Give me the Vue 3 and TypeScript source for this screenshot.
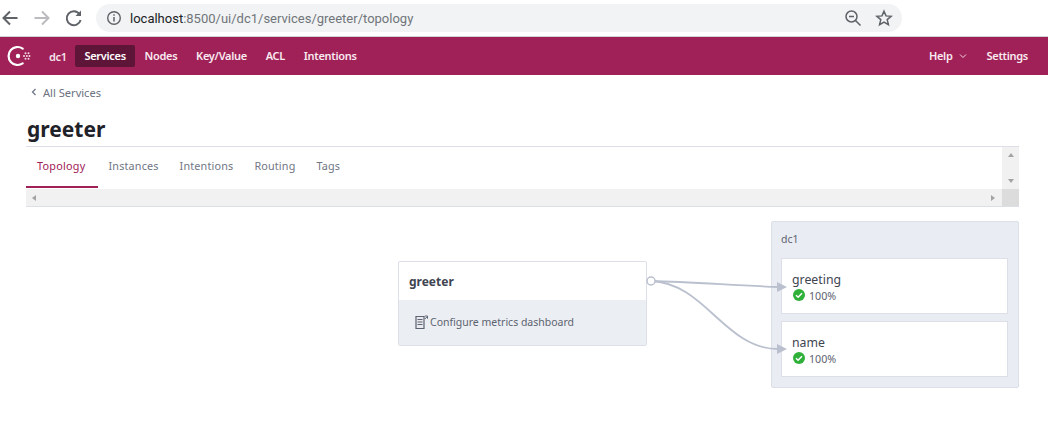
<script setup lang="ts">
const navItems = [
  { label: 'Services', active: true },
  { label: 'Nodes', active: false },
  { label: 'Key/Value', active: false },
  { label: 'ACL', active: false },
  { label: 'Intentions', active: false },
]
const tabs = ['Topology', 'Instances', 'Intentions', 'Routing', 'Tags']
const upstreams = ['greeting', 'name']
</script>

<template>
  <div class="page">
    <header class="browser">
      <svg class="cicon back" width="20" height="20" viewBox="0 0 20 20"><path d="M17.500 10H4M10 3.500 3.500 10l6.500 6.500" fill="none" stroke="#5f6368" stroke-width="2"/></svg>
      <svg class="cicon fwd" width="20" height="20" viewBox="0 0 20 20"><path d="M2.500 10H16M10 3.500l6.500 6.500-6.500 6.500" fill="none" stroke="#b9bbbe" stroke-width="2"/></svg>
      <svg class="cicon reload" width="20" height="20" viewBox="0 0 20 20"><path d="M15.500 6.200A7 7 0 1 0 16.600 12" fill="none" stroke="#5f6368" stroke-width="2"/><path d="M17 2.500V8h-5.500z" fill="#5f6368"/></svg>
      <div class="omnibox">
        <svg width="16" height="16" viewBox="0 0 16 16"><circle cx="8" cy="8" r="6.300" fill="none" stroke="#5f6368" stroke-width="1.400"/><path d="M8 7v4.500M8 4.300v1.500" stroke="#5f6368" stroke-width="1.500"/></svg>
        <span class="url"><span class="host">localhost</span>:8500/ui/dc1/services/greeter/topology</span>
        <svg class="zoomout" width="18" height="18" viewBox="0 0 18 18"><circle cx="7.500" cy="7.500" r="5.500" fill="none" stroke="#5f6368" stroke-width="1.500"/><path d="M5 7.500h5M11.500 11.500l5 5" stroke="#5f6368" stroke-width="1.500"/></svg>
        <svg class="star" width="18" height="18" viewBox="0 0 18 18"><path d="M9 2.200l2 4.700 5.100.4-3.900 3.300 1.200 5L9 13l-4.400 2.600 1.200-5-3.900-3.300 5.100-.4z" fill="none" stroke="#5f6368" stroke-width="1.500"/></svg>
      </div>
    </header>

    <nav class="topnav">
      <svg class="logo" width="25" height="24" viewBox="0 0 25 24">
        <path d="M16.700 4.600a9 9 0 1 0 0 14.800" fill="none" stroke="#fff" stroke-width="2.200" stroke-linecap="round"/>
        <circle cx="12" cy="12" r="2.200" fill="#fff"/>
        <circle cx="18" cy="12" r="1" fill="#f3d8e3"/><circle cx="20.800" cy="12" r="1" fill="#f3d8e3"/><circle cx="23.500" cy="12" r="1" fill="#f3d8e3"/>
        <circle cx="19.500" cy="9.300" r="1" fill="#f3d8e3"/><circle cx="22.500" cy="9.300" r="1" fill="#f3d8e3"/><circle cx="19.500" cy="14.700" r="1" fill="#f3d8e3"/><circle cx="22.500" cy="14.700" r="1" fill="#f3d8e3"/>
      </svg>
      <span class="dc">dc1</span>
      <a v-for="item in navItems" :key="item.label" class="navlink" :class="{ active: item.active }">{{ item.label }}</a>
      <span class="spacer"></span>
      <a class="navlink help">Help
        <svg width="8" height="6" viewBox="0 0 8 6"><path d="M1 1.500 4 4.500l3-3" fill="none" stroke="#f0d5e0" stroke-width="1"/></svg>
      </a>
      <a class="navlink settings">Settings</a>
    </nav>

    <main class="content">
      <div class="crumb">
        <svg width="6" height="8" viewBox="0 0 6 8"><path d="M4.500 1 1.500 4l3 3" fill="none" stroke="#6b7280" stroke-width="1.200"/></svg>
        <span>All Services</span>
      </div>
      <h1>greeter</h1>

      <div class="tabframe">
        <div class="tabarea">
          <div class="tabs">
            <a v-for="(t, i) in tabs" :key="t" class="tab" :class="{ current: i === 0 }">{{ t }}</a>
          </div>
          <div class="vbar">
            <i class="tri up"></i>
            <i class="tri down"></i>
          </div>
        </div>
        <div class="hbar">
          <i class="tri left"></i>
          <i class="tri right"></i>
          <i class="corner"></i>
        </div>
      </div>

      <section class="topology">
        <svg class="wires" width="145" height="100" viewBox="0 0 145 100">
          <path d="M5 21C44 22 84 25 132 27" fill="none" stroke="#bac0ce" stroke-width="1.800"/>
          <path d="M5 21C59 23 79 89 132 89" fill="none" stroke="#bac0ce" stroke-width="1.800"/>
          <path d="M131 22l10 5-10 5zM131 84l10 5-10 5z" fill="#bac0ce"/>
          <circle cx="5" cy="21" r="4" fill="#fff" stroke="#bac0ce" stroke-width="1.500"/>
        </svg>

        <div class="card">
          <div class="card-head">greeter</div>
          <div class="card-foot">
            <svg width="13" height="14" viewBox="0 0 13 14">
              <path d="M1 1.500h8v12H1z" fill="#e8eaef" stroke="#5d6370" stroke-width="1.200"/>
              <path d="M2.500 4.500h5M2.500 7h5M2.500 9.500h5" stroke="#5d6370" stroke-width="1.200"/>
              <path d="M9.800 4 12 1.800M9.800 1h2.700v2.700" fill="none" stroke="#5d6370" stroke-width="1"/>
            </svg>
            <span>Configure metrics dashboard</span>
          </div>
        </div>

        <div class="dcbox">
          <div class="dclabel">dc1</div>
          <div v-for="u in upstreams" :key="u" class="upstream">
            <div class="uname">{{ u }}</div>
            <div class="ustat">
              <svg width="12" height="12" viewBox="0 0 12 12"><circle cx="6" cy="6" r="6" fill="#2eb039"/><path d="M3 6.200l2.100 2.100L9 4.200" fill="none" stroke="#fff" stroke-width="1.500"/></svg>
              <span>100%</span>
            </div>
          </div>
        </div>
      </section>
    </main>
  </div>
</template>

<style>
html, body { margin: 0; background: #fff; overflow: hidden; }
</style>

<style scoped>
.page { width: 1048px; height: 433px; font-family: "Noto Sans", "Open Sans", sans-serif; overflow: hidden; }
.browser { height: 36px; border-bottom: 1px solid #d0d2d5; display: flex; align-items: center; box-sizing: content-box; position: relative; }
.cicon { flex: none; }
.fwd { margin-left: 12px; }
.reload { margin-left: 12px; }
.omnibox { margin-left: 12px; width: 806px; height: 28px; background: #f1f3f4; border-radius: 14px; display: flex; align-items: center; padding-left: 10px; box-sizing: border-box; }
.url { margin-left: 8px; font: 13px Roboto, sans-serif; color: #70757a; flex: 1; }
.host { color: #202124; }
.zoomout { margin-right: 13px; }
.star { margin-right: 9px; }
.topnav { height: 38px; background: #a02157; display: flex; align-items: center; color: #fff; font-size: 11px; letter-spacing: -.3px; font-weight: 600; }
.logo { margin-left: 6px; flex: none; }
.dc { margin-left: 18px; color: #f6e4ec; width: 26px; }
.navlink { padding: 0 9.400px; height: 22px; line-height: 22px; border-radius: 2px; color: #f9eaf0; }
.navlink.active { background: #5f1538; color: #fff; }
.spacer { flex: 1; }
.help { display: flex; align-items: center; gap: 6px; padding: 0; margin-right: 20px; }
.settings { padding: 0; margin-right: 20px; }
.content { padding: 0 29px 0 26px; }
.crumb { height: 35px; padding-left: 5px; display: flex; align-items: center; gap: 6px; font-size: 11.100px; color: #6b7280; }
.crumb svg { flex: none; margin-top: -1px; }
h1 { margin: 0; height: 32px; padding: 4px 0 0 1px; box-sizing: content-box; line-height: 30px; font-size: 21px; font-weight: 700; color: #1f2228; }
.tabframe { border-top: 1px solid #dcdfe8; border-bottom: 1px solid #dcdfe8; }
.tabarea { height: 42px; display: flex; }
.tabs { flex: 1; display: flex; }
.tab { height: 41px; padding: 0 10.500px; line-height: 38px; font-size: 10.800px; letter-spacing: .17px; color: #6f7684; box-sizing: border-box; }
.tab.current { color: #a02157; border-bottom: 2px solid #a02157; width: 72px; padding: 0 0 0 11px; letter-spacing: .25px; }
.vbar { width: 17px; background: #f1f1f1; display: flex; flex-direction: column; align-items: center; justify-content: space-between; padding: 6px 0; box-sizing: border-box; }
.hbar { height: 17px; background: #f1f1f1; display: flex; align-items: center; padding-left: 6px; }
.tri { display: block; width: 0; height: 0; border-style: solid; border-color: transparent; }
.up { border-width: 0 3.500px 4px; border-bottom-color: #a3a3a3; }
.down { border-width: 4px 3.500px 0; border-top-color: #a3a3a3; }
.left { border-width: 3.500px 4px 3.500px 0; border-right-color: #a3a3a3; }
.right { border-width: 3.500px 0 3.500px 4px; border-left-color: #a3a3a3; margin-left: auto; margin-right: 7px; }
.corner { width: 17px; height: 17px; background: #dcdcdc; }
.topology { position: relative; display: flex; align-items: flex-start; padding-top: 14px; padding-left: 372px; }
.wires { position: absolute; left: 620px; top: 53px; z-index: 1; }
.card { margin-top: 40px; width: 249px; height: 85px; border: 1px solid #dcdfe8; border-radius: 2px; box-sizing: border-box; display: flex; flex-direction: column; }
.card-head { height: 38px; padding-left: 10px; line-height: 39px; font-size: 12px; font-weight: 700; color: #3e4450; }
.card-foot { flex: 1; background: #ebeef3; display: flex; align-items: center; gap: 2px; padding: 0 0 2px 16px; font-size: 10.500px; color: #5d6370; }
.dcbox { margin-left: 124px; width: 248px; height: 167px; background: #e9ecf2; border: 1px solid #dcdfe8; border-radius: 2px; box-sizing: border-box; padding: 0 10px 0 9px; }
.dclabel { height: 36px; line-height: 35px; font-size: 10.500px; color: #5d6370; }
.upstream { height: 56px; margin-bottom: 7px; background: #fff; border: 1px solid #dcdfe8; box-sizing: border-box; padding-left: 10px; width: 227px; }
.uname { font-size: 12.300px; line-height: 18px; margin-top: 12px; color: #3e4450; }
.ustat { display: flex; align-items: center; gap: 4px; padding-left: 1px; font-size: 10.700px; line-height: 14px; color: #5d6370; }
.ustat svg { margin-top: -2px; }
</style>
